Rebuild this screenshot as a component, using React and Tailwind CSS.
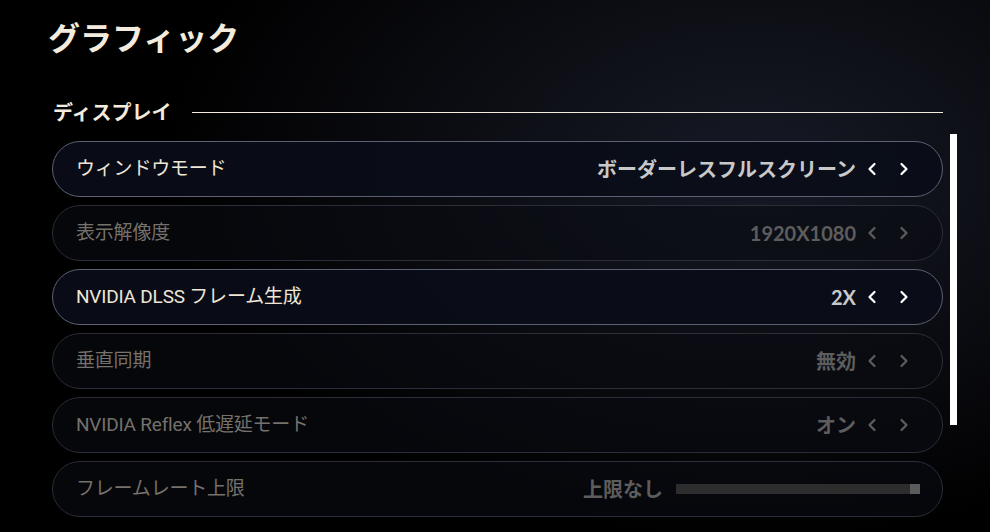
import React from 'react';

const labelFont = { fontFamily: '"Roboto", "Noto Sans CJK JP", sans-serif' };
const valueFont = { fontFamily: '"Lato", "Noto Sans CJK JP", sans-serif' };
const headFont = { fontFamily: '"Noto Sans CJK JP", sans-serif' };

const rows = [
  { label: 'ウィンドウモード', value: 'ボーダーレスフルスクリーン', active: true },
  { label: '表示解像度', value: '1920X1080' },
  { label: 'NVIDIA DLSS フレーム生成', value: '2X', active: true },
  { label: '垂直同期', value: '無効' },
  { label: 'NVIDIA Reflex 低遅延モード', value: 'オン' },
  { label: 'フレームレート上限', value: '上限なし', slider: true },
];

function Chevron({ dir, className }) {
  return (
    <svg width="10" height="14" viewBox="0 0 10 14" className={className} fill="none">
      <polyline
        points={dir === 'left' ? '7.5,2 2.5,7 7.5,12' : '2.5,2 7.5,7 2.5,12'}
        stroke="currentColor"
        strokeWidth="2.2"
        strokeLinecap="round"
        strokeLinejoin="round"
      />
    </svg>
  );
}

function SettingRow({ label, value, active, slider }) {
  return (
    <div
      className={
        'h-14 rounded-full border flex items-center pl-[23px] pr-[22px] ' +
        (active ? 'border-[#5b6172] bg-[#0a0d18]/90' : 'border-[#2b2d38] bg-[#0a0b12]/60')
      }
    >
      <div
        style={labelFont}
        className={'text-[19px] tracking-[-0.2px] flex-1 truncate ' + (active ? 'text-[#eee6d6]' : 'text-[#75716b]')}
      >
        {label}
      </div>
      <div
        style={valueFont}
        className={'text-[20px] font-bold ' + (active ? 'text-[#c9c9c9]' : 'text-[#5d5d5d]')}
      >
        {value}
      </div>
      {slider ? (
        <div className="ml-[13px] w-[244px] h-[10px] bg-[#2d2d2e] flex justify-end">
          <div className="w-[10px] h-full bg-[#5b5b5b]" />
        </div>
      ) : (
        <div className={'flex ' + (active ? 'text-white' : 'text-[#5d5d5d]')}>
          <div className="w-8 flex justify-center">
            <Chevron dir="left" />
          </div>
          <div className="w-8 flex justify-center">
            <Chevron dir="right" />
          </div>
        </div>
      )}
    </div>
  );
}

export default function App() {
  return (
    <div className="w-[990px] h-[532px] overflow-hidden bg-black bg-[radial-gradient(ellipse_60%_70%_at_76%_32%,#161a25_0%,#0c0d13_50%,#000_100%)]">
      <h1 style={headFont} className="pt-4 pl-12 text-[32px] leading-10 font-bold text-[#f3ebdd]">
        グラフィック
      </h1>

      <div className="mt-[42px] flex items-center pl-[53px] w-[943px]">
        <h2 style={headFont} className="text-[20px] leading-7 font-bold text-[#f3ebdd]">
          ディスプレイ
        </h2>
        <div className="ml-5 mt-px flex-1 h-px bg-[#f3ebdd]" />
      </div>

      <div className="mt-[15px] flex items-start">
        <div className="ml-[52px] w-[891px] flex flex-col gap-2">
          {rows.map((r) => (
            <SettingRow key={r.label} {...r} />
          ))}
        </div>
        <div className="ml-[7px] -mt-[7px] w-[7px] h-[291px] bg-white" />
      </div>
    </div>
  );
}
